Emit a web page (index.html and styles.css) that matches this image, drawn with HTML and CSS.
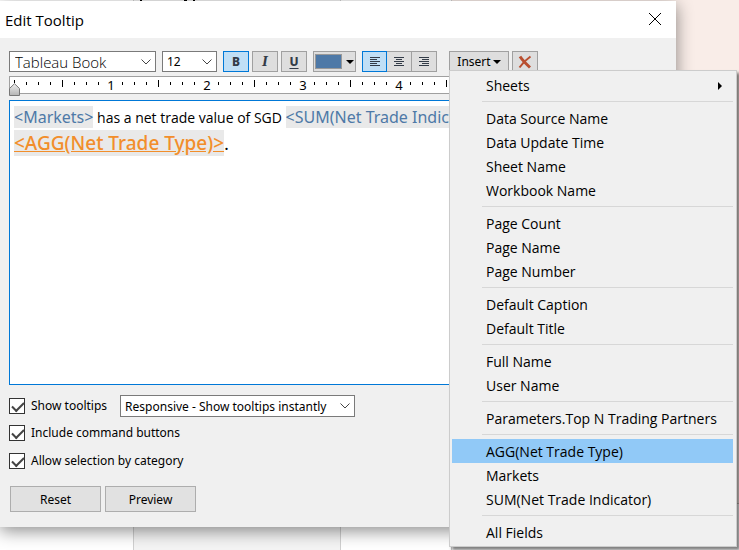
FILE: index.html
```html
<!DOCTYPE html>
<html lang="en">
<head>
<meta charset="utf-8">
<title>Edit Tooltip</title>
<link rel="stylesheet" href="styles.css">
</head>
<body>
<div class="workspace" aria-hidden="true">
  <div class="pane pane-data"></div>
  <div class="pane pane-shelf"><svg width="60" height="2" viewBox="0 0 60 2"><path d="M50 1h3M59 1h2M7 0v2"/></svg></div>
  <div class="pane pane-cards"></div>
  <div class="pane pane-view"><div class="chart"></div></div>
</div>

<main class="dialog" role="dialog" aria-labelledby="title">
  <header class="titlebar">
    <h1 id="title">Edit Tooltip</h1>
    <button class="close" type="button" aria-label="Close"><svg width="14" height="14" viewBox="0 0 14 14"><path d="M1 1l12 12M13 1L1 13"/></svg></button>
  </header>

  <div class="content">
    <div class="toolbar">
      <div class="combo combo-font">
        <select aria-label="Font"><option>Tableau Book</option></select>
        <svg class="chevron" width="10" height="6" viewBox="0 0 10 6"><path d="M.5 .5L5 5L9.500 .5"/></svg>
      </div>
      <div class="combo combo-size">
        <select aria-label="Font size"><option>12</option></select>
        <svg class="chevron" width="10" height="6" viewBox="0 0 10 6"><path d="M.5 .5L5 5L9.500 .5"/></svg>
      </div>
      <div class="group format">
        <button class="tool active bold" type="button" aria-label="Bold">B</button>
        <button class="tool italic" type="button" aria-label="Italic">I</button>
        <button class="tool underline" type="button" aria-label="Underline">U</button>
      </div>
      <button class="tool color" type="button" aria-label="Text color"><span class="swatch"></span><span class="caret"></span></button>
      <div class="group align">
        <button class="tool active" type="button" aria-label="Align left"><svg width="10" height="10" viewBox="0 0 10 10"><path d="M0 .5h10M0 2.500h7M0 4.500h10M0 6.500h7M0 8.500h10"/></svg></button>
        <button class="tool" type="button" aria-label="Align center"><svg width="10" height="10" viewBox="0 0 10 10"><path d="M0 .5h10M2 2.500h6M0 4.500h10M2 6.500h6M0 8.500h10"/></svg></button>
        <button class="tool" type="button" aria-label="Align right"><svg width="10" height="10" viewBox="0 0 10 10"><path d="M0 .5h10M3 2.500h7M0 4.500h10M3 6.500h7M0 8.500h10"/></svg></button>
      </div>
      <div class="insert">
        <button class="tool insert-button" type="button" aria-haspopup="menu" aria-expanded="true">Insert<span class="caret"></span></button>
        <div class="menu" role="menu">
          <button type="button" role="menuitem" class="submenu">Sheets</button>
          <hr>
          <button type="button" role="menuitem">Data Source Name</button>
          <button type="button" role="menuitem">Data Update Time</button>
          <button type="button" role="menuitem">Sheet Name</button>
          <button type="button" role="menuitem">Workbook Name</button>
          <hr>
          <button type="button" role="menuitem">Page Count</button>
          <button type="button" role="menuitem">Page Name</button>
          <button type="button" role="menuitem">Page Number</button>
          <hr>
          <button type="button" role="menuitem">Default Caption</button>
          <button type="button" role="menuitem">Default Title</button>
          <hr>
          <button type="button" role="menuitem">Full Name</button>
          <button type="button" role="menuitem">User Name</button>
          <hr>
          <button type="button" role="menuitem">Parameters.Top N Trading Partners</button>
          <hr>
          <button type="button" role="menuitem" class="selected">AGG(Net Trade Type)</button>
          <button type="button" role="menuitem">Markets</button>
          <button type="button" role="menuitem">SUM(Net Trade Indicator)</button>
          <hr>
          <button type="button" role="menuitem">All Fields</button>
        </div>
      </div>
      <button class="tool clear" type="button" aria-label="Clear"><svg width="14" height="14" viewBox="0 0 14 14"><path class="thick" d="M2 1.500Q5 6 12 12.500"/><path d="M12.500 1.500Q6 6 1.500 12.500"/></svg></button>
    </div>

    <div class="ruler">
      <svg class="ticks" width="100%" height="16">
        <defs>
          <pattern id="inch" x="4" width="96" height="16" patternUnits="userSpaceOnUse">
            <path d="M12 5h1v3h-1zM24 5h1v3h-1zM36 5h1v3h-1zM48 3h1v7h-1zM60 5h1v3h-1zM72 5h1v3h-1zM84 5h1v3h-1z"/>
          </pattern>
        </defs>
        <rect x="4" width="100%" height="16" fill="url(#inch)"/>
        <path d="M4 3h1v3h-1z"/>
        <text x="101" y="13">1</text><text x="197" y="13">2</text><text x="293" y="13">3</text><text x="389" y="13">4</text>
      </svg>
      <svg class="marker" width="11" height="13" viewBox="0 0 11 13">
        <defs><linearGradient id="knob" x2="0" y2="1"><stop offset="0" stop-color="#eee"/><stop offset="1" stop-color="#b4b4b4"/></linearGradient></defs>
        <path d="M.5 12.500V5.500L5.500 .7L10.500 5.500V12.500z" fill="url(#knob)" stroke="#777"/>
      </svg>
    </div>

    <div class="editor" role="textbox" aria-label="Tooltip text" aria-multiline="true" contenteditable="true" spellcheck="false"><p><span class="field">&lt;Markets&gt;</span> has a net trade value of SGD <span class="field">&lt;SUM(Net Trade Indicator)&gt;</span></p><p class="second"><span class="field result">&lt;AGG(Net Trade Type)&gt;</span>.</p></div>

    <div class="options">
      <div class="option">
        <label><input type="checkbox" checked>Show tooltips</label>
        <div class="combo combo-mode">
          <select aria-label="Tooltip behavior"><option>Responsive - Show tooltips instantly</option></select>
          <svg class="chevron" width="10" height="6" viewBox="0 0 10 6"><path d="M.5 .5L5 5L9.500 .5"/></svg>
        </div>
      </div>
      <div class="option"><label><input type="checkbox" checked>Include command buttons</label></div>
      <div class="option"><label><input type="checkbox" checked>Allow selection by category</label></div>
    </div>

    <div class="actions">
      <button type="button">Reset</button>
      <button type="button">Preview</button>
    </div>
  </div>
</main>
</body>
</html>
```
FILE: styles.css
```css
* { box-sizing: border-box; }

body {
  margin: 0;
  min-height: 100vh;
  overflow: hidden;
  font: 12px/16px "Noto Sans", sans-serif;
  color: #000;
}

button, select, input { font: inherit; color: inherit; margin: 0; }
svg { display: block; fill: none; flex: none; }

.workspace {
  position: absolute;
  inset: 0;
  display: grid;
  grid-template-columns: 133px 207px 111px 1fr;
}
.pane { border-left: 1px solid #d0d0d0; background: #fff; }
.pane-data { border-left: 0; }
.pane-shelf { background: #f4f4f4; }
.pane-shelf svg { overflow: visible; stroke: #000; stroke-width: 2; }
.chart {
  height: 504px;
  border-bottom: 1px solid #c8c0bc;
  background: #f9ede8;
}

.dialog {
  position: relative;
  margin: 1px 63px 0 0;
  background: #f0f0f0;
  box-shadow: 0 4px 16px rgba(0, 0, 0, .45);
}

.titlebar {
  display: flex;
  align-items: center;
  justify-content: space-between;
  height: 37px;
  padding: 0 13px 0 5px;
  background: #fff;
}
.titlebar h1 { margin: 0; font: 400 15px/20px "Open Sans", sans-serif; }
.close { border: 0; padding: 0 1px 2px; background: none; }
.close path { stroke: #000; }

.content { padding: 13px 9px 15px; }

.toolbar { display: flex; height: 21px; }

.combo {
  position: relative;
  height: 21px;
  border: 1px solid #7a7a7a;
  background: #fff;
}
.combo select {
  width: 100%;
  height: 100%;
  padding: 1px 20px 0 4px;
  border: 0;
  background: none;
  appearance: none;
}
.chevron { position: absolute; right: 4px; top: 7px; pointer-events: none; }
.chevron path { stroke: #444; }
.combo-font { width: 147px; margin-right: 6px; }
.combo-font select { padding-left: 5px; font: 300 15px/18px "Open Sans", sans-serif; }
.combo-size { width: 55px; margin-right: 6px; }
.combo-mode { width: 235px; height: 22px; }

.group { display: flex; }
.format { gap: 3px; margin-right: 6px; }
.tool {
  display: flex;
  align-items: center;
  justify-content: center;
  width: 26px;
  height: 21px;
  padding: 0;
  border: 1px solid #a0a0a0;
  background: #dedede;
  color: #333c48;
}
.active { border-color: #0078d7; background: #c0dff6; }
.bold, .italic, .underline { font-weight: 800; }
.italic { font-family: "DejaVu Serif", serif; font-style: italic; }
.underline { text-decoration: underline; text-underline-offset: 2px; }
.color { width: 43px; gap: 4px; margin-right: 6px; }
.swatch { width: 27px; height: 15px; border: 1px solid #999; background: #4e79a7; }
.caret {
  border: 4px solid transparent;
  border-top-color: #000;
  border-bottom-width: 0;
}
.align { margin-right: 12px; }
.align .tool { width: 25px; }
.align .tool + .tool { border-left: 0; }
.align path { stroke: #333c48; }
.insert { position: relative; margin-right: 3px; }
.insert-button { width: 60px; gap: 2px; color: #000; }
.clear path { stroke: #b94f30; stroke-width: 2; }
.clear .thick { stroke-width: 3; }

.menu {
  position: absolute;
  z-index: 1;
  top: 19px;
  left: 0;
  width: 288px;
  padding: 2px 3px 2px 2px;
  border: 1px solid #ccc;
  background: #f0f0f0;
  box-shadow: 3px 3px 3px rgba(0, 0, 0, .5);
  font: 14px/20px "Open Sans", sans-serif;
}
.menu button {
  display: flex;
  align-items: center;
  justify-content: space-between;
  width: 100%;
  height: 24px;
  padding: 1px 11px 0 34px;
  border: 0;
  background: none;
  text-align: left;
  white-space: nowrap;
}
.menu .selected { background: #91c9f7; }
.menu hr { height: 1px; margin: 4px 0 4px 30px; border: 0; background: #d7d7d7; }
.submenu::after {
  content: "";
  border: 4px solid transparent;
  border-left-color: #000;
  border-right-width: 0;
}

.ruler {
  position: relative;
  height: 18px;
  margin-top: 4px;
  border: 1px solid #a0a0a0;
  background: #fff;
  font-size: 13px;
}
.ticks path, .ticks text { fill: #000; }
.ticks text { text-anchor: middle; }
.marker { position: absolute; left: -1px; top: 6px; }

.editor {
  height: 285px;
  margin-top: 6px;
  padding: 4px;
  border: 1px solid #0078d7;
  background: #fff;
  font-size: 14px;
  font-family: "Open Sans", sans-serif;
  outline: 0;
  overflow: hidden;
  white-space: nowrap;
}
.editor p { margin: 0; line-height: 24px; }
.field { background: #e9e9e9; color: #4e79a7; font: 400 16px/24px "Noto Sans", sans-serif; }
.editor .result { color: #f28e2b; font-size: 19px; font-weight: 500; text-decoration: underline; }
.editor .second { font-size: 19px; line-height: 26px; }

.options { margin-top: 10px; }
.option { display: flex; align-items: center; gap: 13px; height: 28px; }
.option:first-child { height: 22px; margin-bottom: 2px; }
.option label { display: flex; align-items: center; gap: 6px; }
.option input {
  width: 16px;
  height: 16px;
  border: 1px solid #333;
  background: #fff;
  appearance: none;
}
.option input:checked::before {
  content: "";
  display: block;
  width: 10px;
  height: 5px;
  margin: 3px 0 0 2px;
  border: solid #444;
  border-width: 0 0 2px 2px;
  transform: rotate(-45deg);
}

.actions { display: flex; gap: 4px; margin: 11px 0 0 1px; }
.actions button { width: 91px; height: 26px; padding: 1px 0 0; border: 1px solid #adadad; background: #e1e1e1; }
```
